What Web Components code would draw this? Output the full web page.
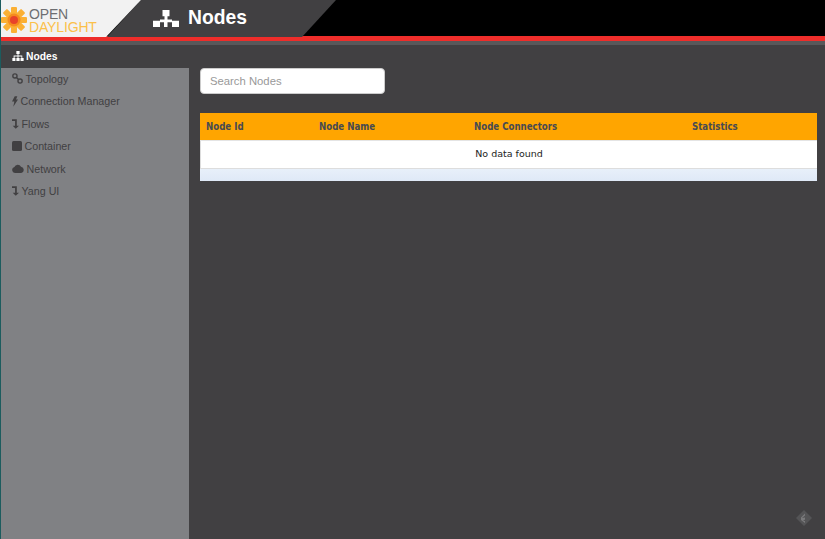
<!DOCTYPE html>
<html>
<head>
<meta charset="utf-8">
<title>Nodes</title>
<style>
  html, body { margin: 0; height: 100%; background: #414042; }
  body { font-family: "Liberation Sans", Arial, sans-serif; overflow: hidden; }
</style>
</head>
<body>
<odl-app>
  <odl-header slot="header" title="Nodes"></odl-header>
  <odl-sidebar slot="sidebar">
    <odl-nav-item icon="sitemap" active>Nodes</odl-nav-item>
    <odl-nav-item icon="link">Topology</odl-nav-item>
    <odl-nav-item icon="bolt">Connection Manager</odl-nav-item>
    <odl-nav-item icon="flow">Flows</odl-nav-item>
    <odl-nav-item icon="stop">Container</odl-nav-item>
    <odl-nav-item icon="cloud">Network</odl-nav-item>
    <odl-nav-item icon="flow">Yang UI</odl-nav-item>
  </odl-sidebar>
  <odl-search placeholder="Search Nodes"></odl-search>
  <odl-table columns="Node Id|Node Name|Node Connectors|Statistics" empty="No data found"></odl-table>
</odl-app>

<script>
const ICONS = {
  sitemap: '<svg viewBox="0 0 13 11" width="12" height="10"><path fill="currentColor" d="M4.700 0h3.600v3.200H7V5h4.200v2.600h1.500V11H9.300V7.600h1V6H7v1.600h1.300V11H4.700V7.600H6V6H2.700v1.600h1V11H.3V7.600h1.400V5H6V3.200H4.700z"/></svg>',
  link: '<svg viewBox="0 0 12 12" width="11" height="11"><g fill="none" stroke="currentColor" stroke-width="1.500"><circle cx="3.200" cy="3.200" r="2.300"/><circle cx="8.800" cy="8.800" r="2.300"/><path d="M4.800 4.800l2.400 2.400"/></g></svg>',
  bolt: '<svg viewBox="0 0 7 12" width="6" height="11"><path fill="currentColor" d="M3.200 0h3L4.700 3.800H7L1.500 12l1.200-6H0z"/></svg>',
  flow: '<svg viewBox="0 0 8 11" width="7" height="10"><path fill="currentColor" d="M0 0h5.500v7.500H8L4.300 11 .8 7.500h2.700V2H0z"/></svg>',
  stop: '<svg viewBox="0 0 10 10" width="10" height="10"><rect width="10" height="10" rx="1.500" fill="currentColor"/></svg>',
  cloud: '<svg viewBox="0 0 12 9" width="12" height="9"><path fill="currentColor" d="M3 9a3 3 0 0 1-.6-5.900A3.600 3.600 0 0 1 9 2.700 3.200 3.200 0 0 1 9.200 9z"/></svg>'
};

class OdlApp extends HTMLElement {
  constructor() {
    super();
    this.attachShadow({ mode: 'open' });
    this.shadowRoot.innerHTML = `
      <style>
        :host { display: grid; grid-template-rows: 45px 1fr; height: 539px; width: 825px; box-sizing: border-box; border-left: 1px solid #1c5c5e; position: relative; }
        .body { display: grid; grid-template-columns: 188px 1fr; min-height: 0; }
        .main { padding: 23px 8px 0 11px; display: flex; flex-direction: column; gap: 19px; }
        .mark { position: absolute; right: 12px; bottom: 12px; width: 18px; height: 18px; }
      </style>
      <slot name="header"></slot>
      <div class="body">
        <slot name="sidebar"></slot>
        <div class="main"><slot></slot></div>
      </div>
      <svg class="mark" viewBox="0 0 18 18">
        <path fill="#545456" d="M9 1l8 8-8 8-8-8z"/>
        <path fill="#7a7a7c" d="M10 4.500v2L7 9l3-.5v2L8 12l2 0v2L6 11V8.500z"/>
      </svg>
    `;
  }
}

class OdlHeader extends HTMLElement {
  constructor() {
    super();
    this.attachShadow({ mode: 'open' });
  }
  connectedCallback() {
    const title = this.getAttribute('title') || '';
    this.removeAttribute('title');
    this.shadowRoot.innerHTML = `
      <style>
        :host { display: block; height: 45px; background: #58585a; }
        .bar { height: 37px; background: linear-gradient(#000 36px, #ee2d2a 36px); display: flex; position: relative; }
        .logo {
          width: 140px; background: #f2f2f2; margin-right: -34px; flex: none;
          clip-path: polygon(0 0, 100% 0, 105px 100%, 0 100%);
          display: flex; align-items: flex-start; position: relative; z-index: 1;
        }
        .words { font-size: 14px; line-height: 13px; letter-spacing: -.15px; margin: 8px 0 0 2px; font-weight: 400; }
        .open { color: #6d6e71; display: block; }
        .day { color: #fbc04a; display: block; }
        .title {
          width: 229px; background: #414042; flex: none; color: #fff;
          clip-path: polygon(34px 0, 100% 0, 195px 100%, 0 100%);
          display: flex; align-items: center; gap: 9px; padding-left: 46px; box-sizing: border-box;
        }
        h1 { font-size: 19.300px; line-height: 36px; margin: 0 0 1px; font-weight: 700; }
        .red { height: 4px; background: #ee2d2a; }
      </style>
      <div class="bar">
        <div class="logo">
          <svg width="26" height="26" viewBox="0 0 26 26" style="flex:none;margin:7px 0 0 0">
            <g fill="#fbb034">
              <rect x="10" y="0" width="6" height="26" rx="1"/>
              <rect x="10" y="0" width="6" height="26" rx="1" transform="rotate(45 13 13)"/>
              <rect x="10" y="0" width="6" height="26" rx="1" transform="rotate(90 13 13)"/>
              <rect x="10" y="0" width="6" height="26" rx="1" transform="rotate(135 13 13)"/>
            </g>
            <circle cx="13" cy="13" r="6.500" fill="#f58a1f"/>
            <circle cx="13" cy="13" r="4" fill="#e8432a"/>
          </svg>
          <div class="words"><span class="open">OPEN</span><span class="day">DAYLIGHT</span></div>
        </div>
        <div class="title">
          <svg width="26" height="17" viewBox="0 0 26 18" preserveAspectRatio="none" style="flex:none"><path fill="#fff" d="M9.500 0h7v6.500H14.500V10H19V11.500h7V18h-7v-5H14.500v5h-3.500v-5H7v5H0v-6.500h7V10h4.500V6.500H9.500z"/></svg>
          <h1>${title}</h1>
        </div>
      </div>
      <div class="red"></div>
    `;
  }
}

class OdlSidebar extends HTMLElement {
  constructor() {
    super();
    this.attachShadow({ mode: 'open' });
    this.shadowRoot.innerHTML = `
      <style>
        :host { display: block; background: #808184; }
      </style>
      <slot></slot>
    `;
  }
}

class OdlNavItem extends HTMLElement {
  constructor() {
    super();
    this.attachShadow({ mode: 'open' });
  }
  connectedCallback() {
    const icon = ICONS[this.getAttribute('icon')] || '';
    this.shadowRoot.innerHTML = `
      <style>
        :host {
          display: flex; align-items: center; gap: 2.500px; height: 22.500px; box-sizing: border-box;
          padding: 0 0 1px 11px; font-size: 10.700px; color: #414042;
        }
        :host([active]) { background: #414042; color: #fff; font-weight: 700; font-size: 10.300px; height: 23px; gap: 2px; }
        .icon { display: inline-flex; }
      </style>
      <span class="icon">${icon}</span><slot></slot>
    `;
  }
}

class OdlSearch extends HTMLElement {
  constructor() {
    super();
    this.attachShadow({ mode: 'open' });
  }
  connectedCallback() {
    this.shadowRoot.innerHTML = `
      <style>
        :host { display: block; }
        input {
          display: block; width: 185px; height: 26px; box-sizing: border-box; padding: 0 9px;
          border: 1px solid #ccc; border-radius: 4px; background: #fff;
          font: 11.300px "Liberation Sans", Arial, sans-serif; color: #555; outline: none;
        }
        input::placeholder { color: #999; opacity: 1; }
      </style>
      <input type="text" placeholder="${this.getAttribute('placeholder') || ''}">
    `;
  }
}

class OdlTable extends HTMLElement {
  constructor() {
    super();
    this.attachShadow({ mode: 'open' });
  }
  connectedCallback() {
    const cols = (this.getAttribute('columns') || '').split('|');
    this.shadowRoot.innerHTML = `
      <style>
        :host { display: block; font: 9.500px "DejaVu Sans", Verdana, sans-serif; }
        .head { display: grid; grid-template-columns: 113px 155px 218px 1fr; height: 27px; background: #ffa500; align-items: center; padding-left: 6px; color: #484a52; font-weight: 700; font-size: 9.600px; font-stretch: condensed; border-bottom: 1px solid #e4e4e4; }
        .empty { height: 27px; box-sizing: content-box; background: #fff; display: flex; align-items: center; justify-content: center; color: #222; border-bottom: 1px solid #ddd; border-left: 1px solid #ddd; }
        .empty span { position: relative; top: -1px; }
        .foot { height: 12px; background: linear-gradient(#e8f0fa, #dfe9f7); }
      </style>
      <div class="head">${cols.map(c => `<span>${c}</span>`).join('')}</div>
      <div class="empty"><span>${this.getAttribute('empty') || ''}</span></div>
      <div class="foot"></div>
    `;
  }
}

customElements.define('odl-app', OdlApp);
customElements.define('odl-header', OdlHeader);
customElements.define('odl-sidebar', OdlSidebar);
customElements.define('odl-nav-item', OdlNavItem);
customElements.define('odl-search', OdlSearch);
customElements.define('odl-table', OdlTable);
</script>
</body>
</html>
